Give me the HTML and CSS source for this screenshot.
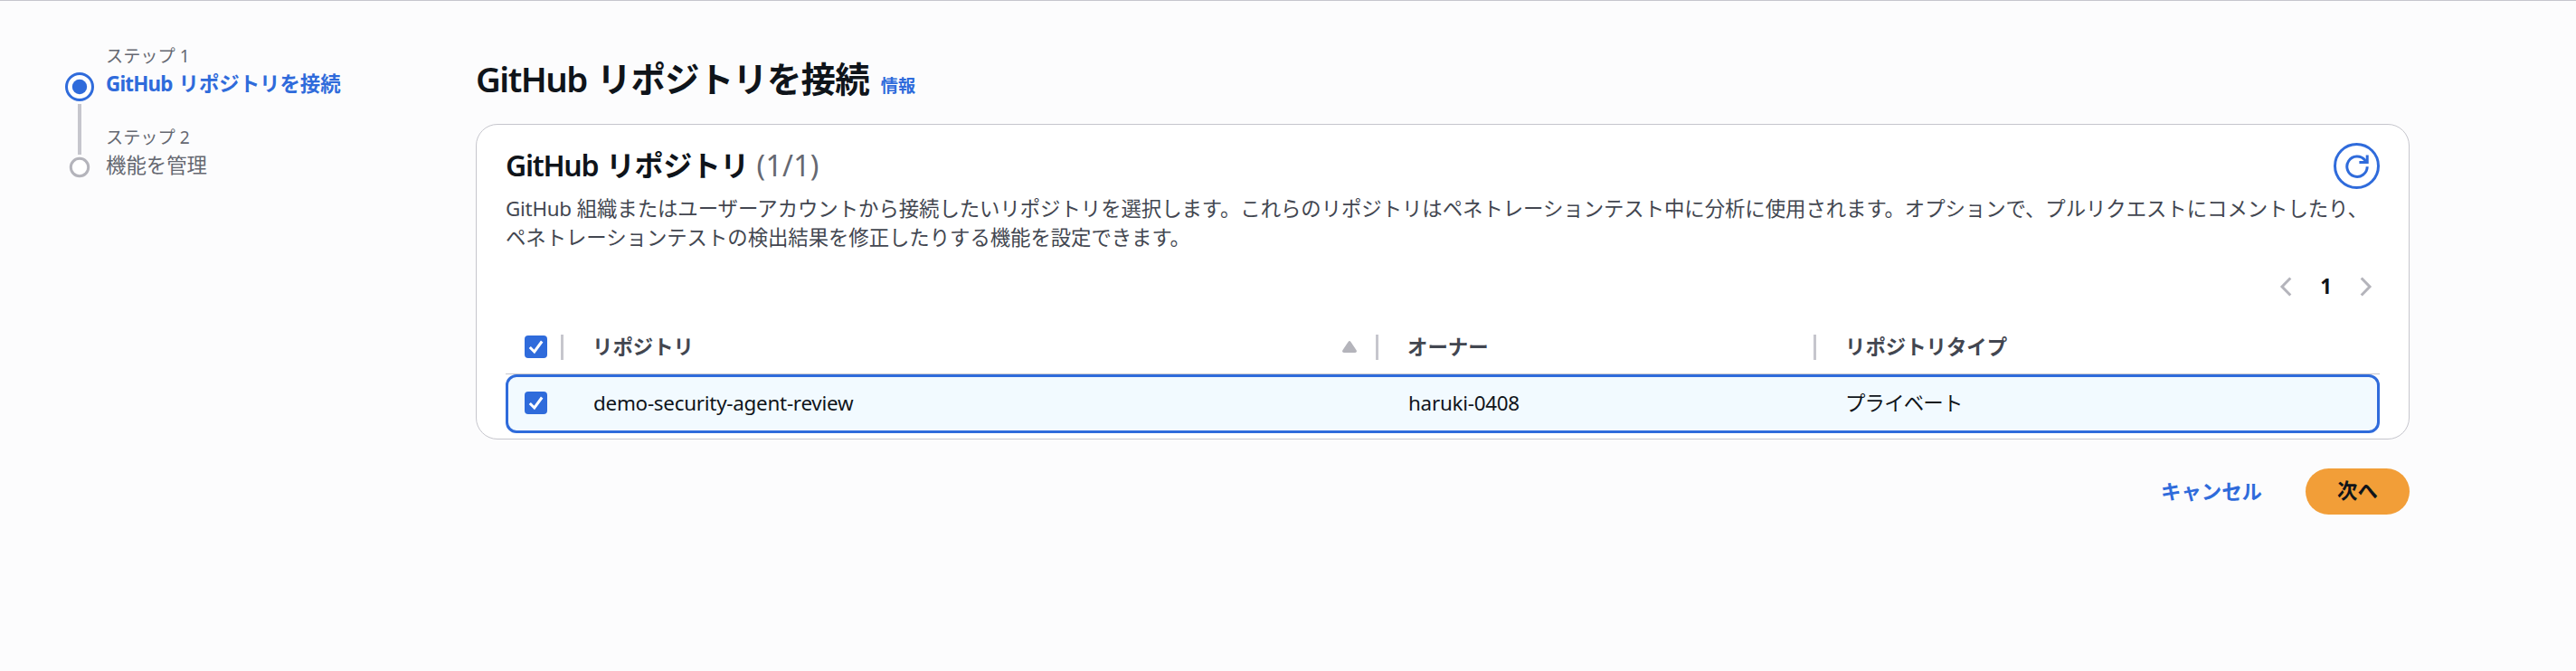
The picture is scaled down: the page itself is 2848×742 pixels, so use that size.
FILE: index.html
```
<!DOCTYPE html>
<html lang="ja">
  <head>
    <meta charset="UTF-8" />
    <meta name="viewport" content="width=device-width, initial-scale=1.0" />
    <title>GitHub リポジトリを接続</title>
    <link rel="stylesheet" href="styles.css">
  </head>
  <body>
    <div class="wizard">
      <nav class="steps">
        <svg class="steps-line" width="36" height="130" viewBox="0 0 36 130">
          <circle cx="18" cy="18" r="14.5" fill="#fff" stroke="#2f6bdb" stroke-width="3" />
          <circle cx="18" cy="18" r="8.2" fill="#2f6bdb" />
          <path d="M18 37v56" stroke="#c6c6cd" stroke-width="4" />
          <circle cx="18" cy="107" r="9.7" fill="#fff" stroke="#b4b4bb" stroke-width="3" />
        </svg>
        <ul>
          <li class="current">
            <span class="step-no">ステップ 1</span>
            <a class="step-name"><span class="latin">GitHub</span> リポジトリを接続</a>
          </li>
          <li>
            <span class="step-no">ステップ 2</span>
            <a class="step-name">機能を管理</a>
          </li>
        </ul>
      </nav>
      <main>
        <div class="title">
          <h1><span class="latin">GitHub</span> リポジトリを接続</h1>
          <a class="info">情報</a>
        </div>
        <section class="card">
          <div class="card-header">
            <h2><span class="latin">GitHub</span> リポジトリ <span class="counter">(1/1)</span></h2>
            <button class="refresh" aria-label="更新">
              <svg width="28" height="28" viewBox="0 0 28 28" fill="none" stroke="#2f6bdb" stroke-width="3">
                <path d="M25.2 14.3A11.2 11.2 0 1 1 22.6 7l2.6 2.6" />
                <path d="M25.2 1.5v8.1h-8.8" />
              </svg>
            </button>
          </div>
          <p class="desc"><span class="latin">GitHub</span> 組織またはユーザーアカウントから接続したいリポジトリを選択します。これらのリポジトリはペネトレーションテスト中に分析に使用されます。オプションで、プルリクエストにコメントしたり、</p>
          <p class="desc">ペネトレーションテストの検出結果を修正したりする機能を設定できます。</p>
          <div class="pagination">
            <svg width="14" height="22" viewBox="0 0 14 22"><path d="M12.3 1.5L3 11l9.3 9.5" /></svg>
            <span>1</span>
            <svg width="14" height="22" viewBox="0 0 14 22"><path d="M1.7 1.5L11 11l-9.3 9.5" /></svg>
          </div>
          <div class="table">
            <div class="row head">
              <div class="cell check">
                <svg class="checkbox" width="25" height="25" viewBox="0 0 25 25"><rect width="25" height="25" rx="4" /><path d="M5.8 13l5 5L19.2 6.5" /></svg>
              </div>
              <div class="cell">リポジトリ
                <svg class="sort" width="16" height="13" viewBox="0 0 16 13"><path d="M6.6 1Q8-.8 9.4 1l6.2 9.2q1 2.8-1.4 2.8H1.8q-2.4 0-1.4-2.8z" /></svg>
              </div>
              <div class="cell">オーナー</div>
              <div class="cell">リポジトリタイプ</div>
            </div>
            <div class="row selected">
              <div class="cell check">
                <svg class="checkbox" width="25" height="25" viewBox="0 0 25 25"><rect width="25" height="25" rx="4" /><path d="M5.8 13l5 5L19.2 6.5" /></svg>
              </div>
              <div class="cell latin">demo-security-agent-review</div>
              <div class="cell latin">haruki-0408</div>
              <div class="cell type">プライベート</div>
            </div>
          </div>
        </section>
        <div class="actions">
          <button class="cancel">キャンセル</button>
          <button class="next">次へ</button>
        </div>
      </main>
    </div>
  </body>
</html>
```
FILE: styles.css
```
* {
  margin: 0;
  padding: 0;
  box-sizing: border-box;
}
body {
  min-height: 742px;
  border-top: 1px solid #c6c6cd;
  background-color: #fcfcfd;
  color: #0f141a;
  font-family: "Noto Sans", "Noto Sans CJK JP", sans-serif;
  font-size: 22.4px;
  line-height: 32px;
  white-space: nowrap;
}
svg {
  display: block;
  flex: none;
}
button {
  border: none;
  background: none;
  font: inherit;
}
.latin {
  letter-spacing: -0.25px;
}
.wizard {
  display: flex;
}
.steps {
  display: flex;
  width: 526px;
  padding: 46px 0 0 70px;
}
.steps-line {
  margin-top: 31px;
}
.steps ul {
  list-style: none;
  padding-left: 11px;
}
.steps li {
  height: 90px;
  color: #656871;
}
.step-no {
  display: block;
  font-size: 19.2px;
  line-height: 30px;
}
.step-name {
  display: block;
}
.current .step-name {
  color: #2f6bdb;
  font-weight: 700;
  word-spacing: 1px;
}
.current .latin {
  letter-spacing: -0.8px;
}
main {
  width: 2138px;
  padding-top: 61px;
}
.title {
  display: flex;
  align-items: baseline;
  gap: 13px;
  height: 75px;
}
h1 {
  font-size: 38.4px;
  line-height: 50px;
  font-weight: 600;
  letter-spacing: -0.02em;
  word-spacing: 2px;
}
h2 {
  margin-top: -2px;
  font-size: 32px;
  font-weight: 600;
  letter-spacing: -0.015em;
  word-spacing: 1px;
}
h1 .latin,
h2 .latin {
  letter-spacing: -0.04em;
}
.info {
  color: #2f6bdb;
  font-size: 19.2px;
  font-weight: 600;
}
.card {
  height: 349px;
  padding: 20px 32px 0;
  border: 1px solid #c6c6cd;
  border-radius: 24px;
  background-color: #fff;
}
.card-header {
  display: flex;
  align-items: center;
  justify-content: space-between;
  height: 51px;
}
.counter {
  color: #656871;
  font-weight: 400;
  letter-spacing: 0.3px;
}
.refresh {
  display: flex;
  align-items: center;
  justify-content: center;
  width: 51px;
  height: 51px;
  border: 3px solid #2f6bdb;
  border-radius: 50%;
}
.desc {
  color: #424650;
  letter-spacing: -0.05px;
}
.card-header + .desc {
  margin-top: 6px;
}
.pagination {
  display: flex;
  align-items: center;
  justify-content: flex-end;
  gap: 31px;
  height: 32px;
  margin-top: 22px;
  padding-right: 8px;
  font-weight: 700;
}
.pagination path {
  fill: none;
  stroke: #b4b4bb;
  stroke-width: 3;
}
.table {
  position: relative;
  z-index: 0;
  margin-top: 22px;
}
.row {
  display: grid;
  grid-template-columns: 64px 901px 484px 1fr;
  align-items: center;
}
.head {
  height: 59px;
  padding-bottom: 1px;
  border-bottom: 1px solid #c6c6cd;
  color: #424650;
  font-weight: 600;
}
.cell {
  display: flex;
  align-items: center;
  padding-left: 32px;
}
.check {
  padding-left: 21px;
}
.head .cell {
  height: 28px;
  border-right: 3px solid #c6c6cd;
}
.head .cell:last-child {
  border-right: none;
}
.sort {
  margin-left: auto;
  margin-right: 21px;
  fill: #b4b4bb;
}
.checkbox rect {
  fill: #2f6bdb;
}
.checkbox path {
  fill: none;
  stroke: #fff;
  stroke-width: 3;
}
.selected {
  position: relative;
  height: 65px;
  padding-bottom: 2px;
}
/* outline drawn over the row so the columns stay aligned with the head */
.selected::before {
  content: "";
  position: absolute;
  inset: 0;
  z-index: -1;
  border: 3px solid #2f6bdb;
  border-radius: 12px;
  background-color: #f2faff;
}
.selected .latin {
  padding-left: 33px;
}
.type {
  letter-spacing: -0.8px;
}
.actions {
  display: flex;
  justify-content: flex-end;
  gap: 48px;
  margin-top: 32px;
  font-weight: 600;
}
.cancel {
  color: #2f6bdb;
}
.next {
  width: 115px;
  height: 51px;
  padding-bottom: 2px;
  border-radius: 26px;
  background-color: #f29e38;
  color: #0f141a;
}
```
